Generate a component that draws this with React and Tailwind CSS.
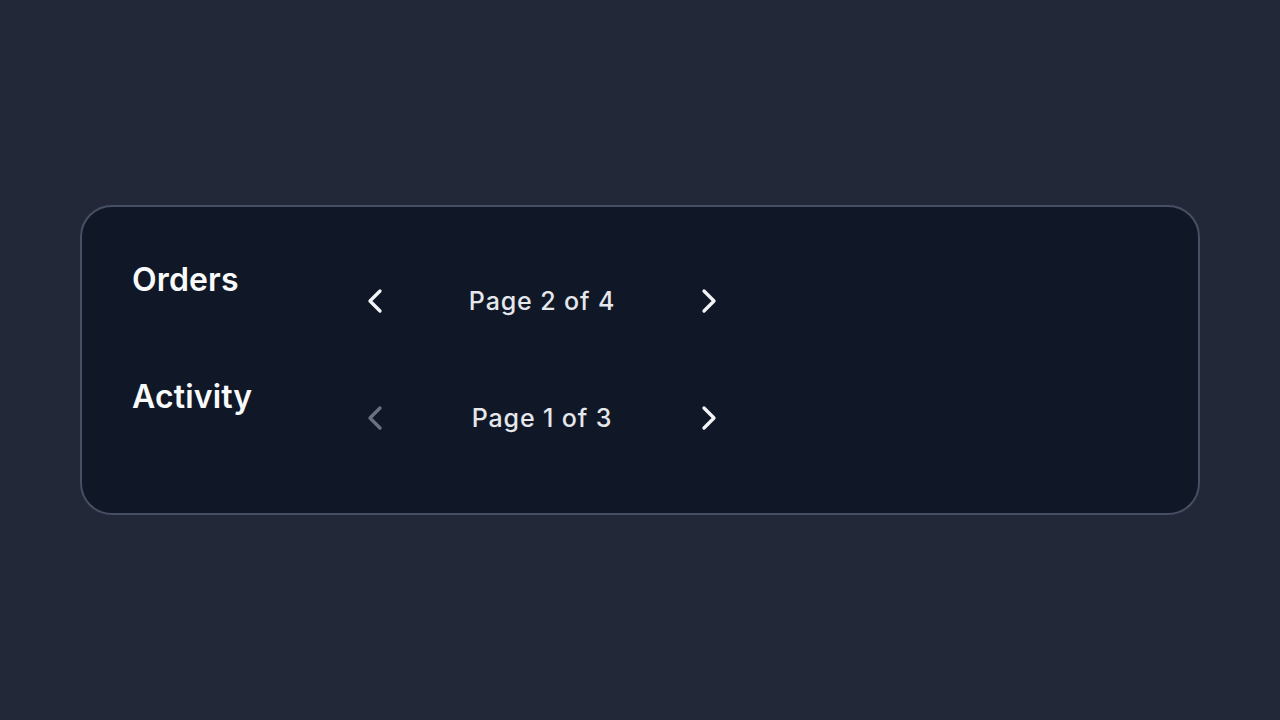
import React, { useState } from 'react';
import { ChevronLeft, ChevronRight } from 'lucide-react';

const Pager = ({ page, total, onChange }) => {
  const canPrev = page > 1;
  const canNext = page < total;

  return (
    <div className="flex items-center mt-[17px]">
      <button
        type="button"
        disabled={!canPrev}
        onClick={() => onChange(page - 1)}
        className={`flex h-12 w-12 items-center justify-center ${canPrev ? 'text-gray-100' : 'text-gray-500'}`}
        aria-label="Previous page"
      >
        <ChevronLeft size={40} strokeWidth={2} />
      </button>
      <span className="w-[286px] text-center text-[25px] leading-8 tracking-[0.035em] font-medium text-gray-200">
        Page {page} of {total}
      </span>
      <button
        type="button"
        disabled={!canNext}
        onClick={() => onChange(page + 1)}
        className={`flex h-12 w-12 items-center justify-center ${canNext ? 'text-gray-100' : 'text-gray-500'}`}
        aria-label="Next page"
      >
        <ChevronRight size={40} strokeWidth={2} />
      </button>
    </div>
  );
};

const App = () => {
  const [orders, setOrders] = useState(2);
  const [activity, setActivity] = useState(1);

  const rows = [
    { label: 'Orders', page: orders, total: 4, onChange: setOrders },
    { label: 'Activity', page: activity, total: 3, onChange: setActivity },
  ];

  return (
    <div
      className="min-h-screen flex items-center bg-[#232839] px-20"
      style={{ fontFamily: 'Inter, "Noto Sans", sans-serif' }}
    >
      <div className="w-full rounded-[32px] border-2 border-[#464f63] bg-gray-900 pl-[50px] pt-[53px] pb-[71px]">
        <div className="flex flex-col gap-[52px]">
          {rows.map((row) => (
            <div key={row.label} className="flex items-start">
              <h3 className="w-[219px] text-[32px] leading-10 font-semibold tracking-[0.005em] text-gray-50">
                {row.label}
              </h3>
              <Pager page={row.page} total={row.total} onChange={row.onChange} />
            </div>
          ))}
        </div>
      </div>
    </div>
  );
};

export default App;
